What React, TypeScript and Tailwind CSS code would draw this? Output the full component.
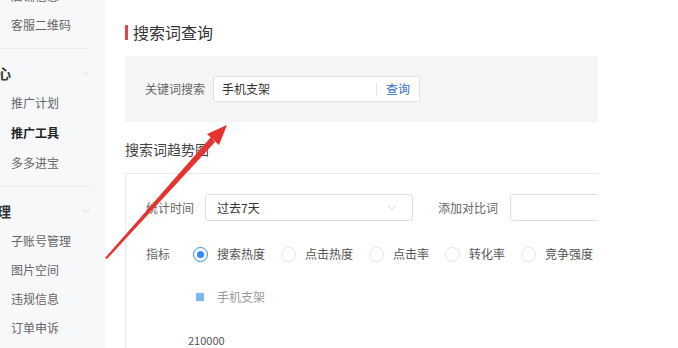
import { ChevronDown } from "lucide-react";

const font = { fontFamily: '"Noto Sans CJK SC", "Noto Sans", sans-serif' };

function SideItem({ label, active }: { label: string; active?: boolean }) {
  return (
    <div
      className={`h-[29px] flex items-center pl-[11px] text-[12px] whitespace-nowrap ${
        active ? "font-bold text-[#222]" : "text-[#666]"
      }`}
    >
      {label}
    </div>
  );
}

function SideHeader({ label }: { label: string }) {
  return (
    <div className="h-[30px] flex items-center justify-between pr-[12px]">
      <span className="text-[14px] font-bold text-[#333] -ml-[3px]">{label}</span>
      <ChevronDown size={14} strokeWidth={1.2} className="text-[#cfcfcf]" />
    </div>
  );
}

function Radio({ label, checked }: { label: string; checked?: boolean }) {
  return (
    <div className="flex items-center mr-[16px] shrink-0">
      <span
        className={`w-[15px] h-[15px] shrink-0 rounded-full border flex items-center justify-center ${
          checked ? "border-[#2d8cf0]" : "border-[#e3e3e3]"
        }`}
      >
        {checked && <span className="w-[7px] h-[7px] rounded-full bg-[#2d8cf0]" />}
      </span>
      <span className="ml-[9px] text-[12px] text-[#555] whitespace-nowrap">{label}</span>
    </div>
  );
}

export default function App() {
  return (
    <div className="relative w-[678px] h-[348px] overflow-hidden bg-white flex" style={font}>
      {/* sidebar */}
      <div className="w-[105px] shrink-0 bg-[#f7f8fa] overflow-hidden">
        <div className="-mt-[19px]">
          <SideItem label="店铺信息" />
          <SideItem label="客服二维码" />
          <div className="h-[19px] flex items-center mr-[14px]">
            <div className="w-full h-px bg-[#ececec]" />
          </div>
          <SideHeader label="心" />
          <div className="h-[30px] flex items-center pl-[11px] text-[12px] text-[#666]">推广计划</div>
          <div className="h-[30px] flex items-center pl-[11px] text-[12px] font-bold text-[#222]">推广工具</div>
          <SideItem label="多多进宝" />
          <div className="h-[19px] flex items-center mr-[14px]">
            <div className="w-full h-px bg-[#ececec]" />
          </div>
          <SideHeader label="理" />
          <SideItem label="子账号管理" />
          <SideItem label="图片空间" />
          <SideItem label="违规信息" />
          <SideItem label="订单申诉" />
        </div>
      </div>

      {/* main */}
      <div className="pl-[20px] w-[493px] shrink-0">
        <div className="pt-[24px] flex items-center h-[40px]">
          <span className="w-[3px] h-[15px] bg-[#e0474b]" />
          <span className="ml-[5px] text-[16px] leading-4 text-[#333]">搜索词查询</span>
        </div>

        <div className="mt-[16px] h-[66px] w-[473px] bg-[#f5f5f5] flex items-center pl-[20px]">
          <span className="text-[12px] text-[#666] w-[68px] shrink-0">关键词搜索</span>
          <div className="w-[207px] h-[26px] shrink-0 bg-white border border-[#e2e2e2] rounded-[2px] flex items-center">
            <span className="pl-[8px] text-[12px] text-[#333] flex-1">手机支架</span>
            <span className="w-px h-[12px] bg-[#e4e4e4]" />
            <span className="px-[9px] text-[12px] text-[#3a6fc4]">查询</span>
          </div>
        </div>

        <div className="mt-[17px] text-[14px] leading-[20px] text-[#444]">搜索词趋势图</div>

        <div className="mt-[14px] w-[473px] h-[200px] border-t border-l border-[#e8e8e8] pl-[20px] overflow-hidden">
          <div className="mt-[20px] flex items-center h-[27px]">
            <span className="w-[59px] shrink-0 text-[12px] text-[#666]">统计时间</span>
            <div className="w-[208px] h-[27px] shrink-0 border border-[#dedede] rounded-[3px] flex items-center justify-between pl-[11px] pr-[13px]">
              <span className="text-[12px] text-[#333]">过去7天</span>
              <ChevronDown size={14} strokeWidth={1.2} className="text-[#c4c4c4]" />
            </div>
            <span className="ml-[25px] shrink-0 text-[12px] text-[#666] whitespace-nowrap">添加对比词</span>
            <div className="ml-[12px] w-[120px] h-[27px] shrink-0 border border-[#dedede] rounded-[3px]" />
          </div>

          <div className="mt-[25px] flex items-center h-[16px]">
            <span className="w-[47px] shrink-0 text-[12px] text-[#666]">指标</span>
            <Radio label="搜索热度" checked />
            <Radio label="点击热度" />
            <Radio label="点击率" />
            <Radio label="转化率" />
            <Radio label="竞争强度" />
          </div>

          <div className="mt-[27px] flex items-center h-[16px] pl-[50px]">
            <span className="w-[8px] h-[8px] bg-[#7cb9ec]" />
            <span className="ml-[13px] text-[12px] text-[#999]">手机支架</span>
          </div>

          <div className="mt-[27px] pl-[42px] text-[11px] leading-4 text-[#555]">210000</div>
        </div>
      </div>

      {/* red annotation arrow */}
      <svg className="absolute left-0 top-0 pointer-events-none" width="678" height="348">
        <polygon points="105,258 107,259 215,142 211,137" fill="#e5332f" />
        <polygon points="227,125 219,145 207,134" fill="#e5332f" />
      </svg>
    </div>
  );
}
